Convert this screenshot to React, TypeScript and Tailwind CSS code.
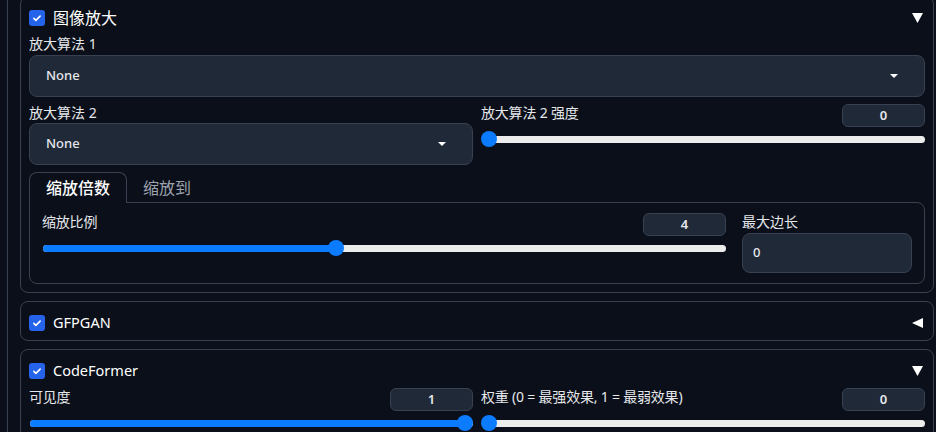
import React from 'react';

const FONT = "font-['Noto_Sans','Noto_Sans_CJK_SC',sans-serif]";

const Checkbox: React.FC = () => (
  <span className="flex h-4 w-4 shrink-0 items-center justify-center rounded-[3px] bg-[#2563eb]">
    <svg viewBox="0 0 16 16" className="h-[10px] w-[10px]" fill="none">
      <path d="M3 8.5l3.2 3.2L13 5" stroke="white" strokeWidth="2.6" strokeLinecap="round" strokeLinejoin="round" />
    </svg>
  </span>
);

const Tri: React.FC<{ dir: 'down' | 'left' }> = ({ dir }) => (
  <svg viewBox="0 0 11 10" className="mr-[2px] h-[10px] w-[11px]">
    {dir === 'down' ? <polygon points="0,0 11,0 5.5,10" fill="white" /> : <polygon points="11,0 11,10 0,5" fill="white" />}
  </svg>
);

const Caret: React.FC = () => (
  <svg viewBox="0 0 8 4" className="h-1 w-2">
    <polygon points="0,0 8,0 4,4" fill="white" />
  </svg>
);

const Slider: React.FC<{ pct: number }> = ({ pct }) => (
  <div className="relative h-4">
    <div className="absolute left-px right-0 top-[5px] h-[7px] rounded-full bg-[#ececec]" />
    <div
      className="absolute left-px top-[5px] h-[7px] rounded-full bg-[#0b7bff]"
      style={{ width: `calc(8px + (100% - 17px) * ${pct})` }}
    />
    <div
      className="absolute top-0 h-4 w-4 rounded-full bg-[#0b7bff]"
      style={{ left: `calc((100% - 16px) * ${pct})` }}
    />
  </div>
);

const NumBox: React.FC<{ value: string }> = ({ value }) => (
  <div className="flex h-[23px] w-[83px] shrink-0 items-center justify-center rounded-md border border-[#374151] bg-[#1f2937] text-[13px] font-semibold text-[#e5e7eb]">
    {value}
  </div>
);

const Dropdown: React.FC = () => (
  <div className="flex h-[42px] items-center justify-between rounded-lg border border-[#374151] bg-[#1f2937] pl-4 pr-[26px]">
    <span className="text-[13px] font-medium text-[#e5e7eb]">None</span>
    <Caret />
  </div>
);

const SliderField: React.FC<{ label: string; value: string; pct: number }> = ({ label, value, pct }) => (
  <div className="flex flex-col">
    <div className="flex h-[23px] items-start justify-between">
      <span className="text-[14px] leading-[18px] tracking-[-0.2px] text-[#e5e7eb]">{label}</span>
      <NumBox value={value} />
    </div>
    <div className="mt-1">
      <Slider pct={pct} />
    </div>
  </div>
);

const Header: React.FC<{ title: string; dir: 'down' | 'left'; size: string }> = ({ title, dir, size }) => (
  <div className="flex h-[23px] items-center justify-between">
    <div className="flex items-center gap-2">
      <Checkbox />
      <span className={`${size} text-white`}>{title}</span>
    </div>
    <Tri dir={dir} />
  </div>
);

export default function App() {
  return (
    <div className={`h-[432px] w-[936px] overflow-hidden bg-[#0b0f19] pl-[7px] ${FONT}`}>
      <div className="flex h-full flex-col gap-2 border-l border-[#374151] pl-3 pr-[2px]">
        {/* 图像放大 */}
        <div className="-mt-1 shrink-0 rounded-lg border border-[#374151] px-2 pb-2 pt-[9px]">
          <Header title="图像放大" dir="down" size="text-[16px]" />
          <div className="mt-[6px] text-[14px] leading-[18px] text-[#e5e7eb]">放大算法 1</div>
          <div className="mt-[2px]">
            <Dropdown />
          </div>
          <div className="mt-[7px] grid grid-cols-2 gap-2">
            <div className="flex flex-col">
              <span className="text-[14px] leading-[18px] text-[#e5e7eb]">放大算法 2</span>
              <div className="mt-px">
                <Dropdown />
              </div>
            </div>
            <SliderField label="放大算法 2 强度" value="0" pct={0} />
          </div>
          <div className="mt-[7px]">
            <div className="flex h-[30px]">
              <div className="relative z-10 flex h-[31px] items-center rounded-t-lg border border-b-0 border-[#374151] bg-[#0b0f19] px-4 text-[16px] font-medium text-white">
                缩放倍数
              </div>
              <div className="flex h-[31px] items-center px-4 text-[16px] text-[#9ca3af]">缩放到</div>
            </div>
            <div className="flex gap-4 rounded-b-lg rounded-tr-lg border border-[#374151] px-3 pb-[10px] pt-[10px]">
              <div className="flex-1">
                <SliderField label="缩放比例" value="4" pct={3 / 7} />
              </div>
              <div className="flex w-[170px] flex-col">
                <span className="text-[14px] leading-[18px] text-[#e5e7eb]">最大边长</span>
                <div className="mt-[2px] flex h-[40px] items-center rounded-lg border border-[#374151] bg-[#1f2937] pl-[10px] text-[13px] font-medium text-[#e5e7eb]">
                  0
                </div>
              </div>
            </div>
          </div>
        </div>

        {/* GFPGAN */}
        <div className="shrink-0 rounded-lg border border-[#374151] px-2 pb-[9px] pt-[13px]">
          <div className="flex h-4 items-center justify-between">
            <div className="flex items-center gap-2">
              <Checkbox />
              <span className="text-[14.5px] text-white">GFPGAN</span>
            </div>
            <Tri dir="left" />
          </div>
        </div>

        {/* CodeFormer */}
        <div className="shrink-0 rounded-lg border border-[#374151] px-2 pb-2 pt-[9px]">
          <Header title="CodeFormer" dir="down" size="text-[14.5px]" />
          <div className="mt-[6px] grid grid-cols-2 gap-2">
            <SliderField label="可见度" value="1" pct={1} />
            <SliderField label="权重 (0 = 最强效果, 1 = 最弱效果)" value="0" pct={0} />
          </div>
        </div>
      </div>
    </div>
  );
}
